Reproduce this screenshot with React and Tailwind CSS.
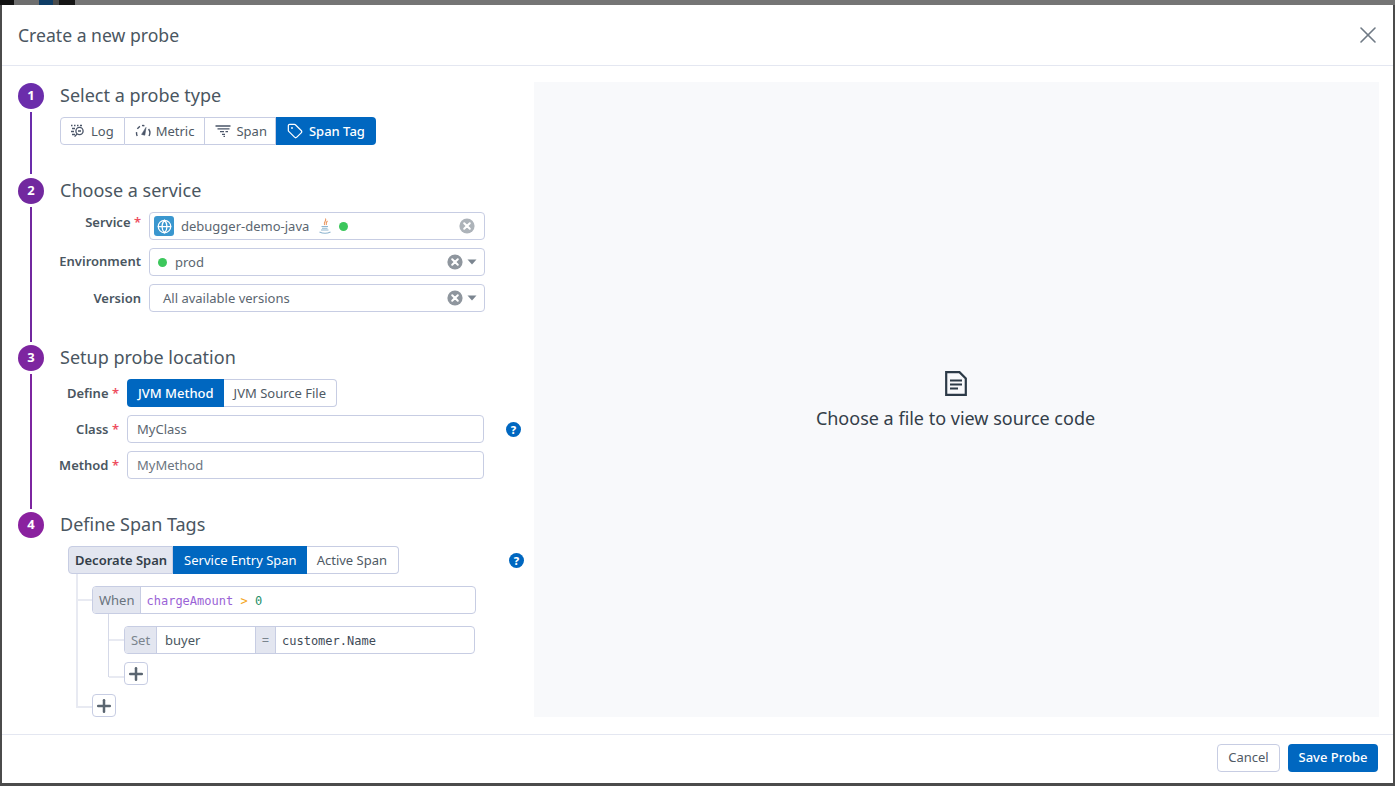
import React from "react";
import { Tag, X, Plus, Globe } from "lucide-react";

const LogIcon = () => (
  <svg width="16" height="14" viewBox="0 0 16 14" fill="none" stroke="#4a5568" strokeWidth="1.3">
    <path d="M1 1.5h1.5M4 1.5h1.5M7 1.5h1.5M10 1.5h2M2 4.5h3M1 7.5h3M2 10.5h3" />
    <circle cx="9.5" cy="7" r="3.6" />
    <path d="M7 10l-2.4 2.6M8 7h3" />
  </svg>
);
const GaugeIcon = () => (
  <svg width="16" height="14" viewBox="0 0 16 14" fill="none" stroke="#4a5568" strokeWidth="1.4">
    <path d="M2.2 12A6.5 6.5 0 0 1 1.6 8.2M2.4 4.8A6.5 6.5 0 0 1 5 2.4M7 1.6a6.5 6.5 0 0 1 2.4.1M14 12A6.5 6.5 0 0 0 13.6 5" />
    <path d="M6.6 10.4L11 3.4L9.8 11.2z" fill="#4a5568" strokeWidth="0.6" />
  </svg>
);
const SpanIcon = () => (
  <svg width="16" height="12" viewBox="0 0 16 12" fill="none" stroke="#4a5568" strokeWidth="1.3">
    <path d="M0.5 1h15M2.5 3.8h12M5 6.6h4M10.5 6.6h2.5M7 9.4h3M8.5 11.5h1.5" />
  </svg>
);
const JavaIcon = () => (
  <svg width="14" height="16" viewBox="0 0 14 16" fill="none" strokeWidth="1.1">
    <path d="M7.5 0.5C9 3 5 4 6.5 7M9.5 3C7.5 4.5 8 5.5 8.4 7" stroke="#e9945c" />
    <path d="M3.5 8.5h6.5M4 10.3h5.5M3 12h7.5M1.5 14c3 1.4 8 1.4 11 0" stroke="#8fb6d0" />
  </svg>
);
const FileIcon = () => (
  <svg width="22" height="25" viewBox="0 0 22 25" fill="none" stroke="#2c3a47" strokeWidth="2.2">
    <path d="M1.2 1.2h13.3l6.3 6.3v16.3H1.2z" />
    <path d="M5 9.5h12M5 13.5h12M5 17.5h8" />
  </svg>
);
const ClearIcon = ({ color = "#8f969e" }) => (
  <svg width="16" height="16" viewBox="0 0 16 16">
    <circle cx="8" cy="8" r="7.6" fill={color} />
    <path d="M5.2 5.2l5.6 5.6M10.8 5.2l-5.6 5.6" stroke="#fff" strokeWidth="2" strokeLinecap="round" />
  </svg>
);
const Caret = () => (
  <svg width="10" height="6" viewBox="0 0 10 6"><path d="M0.5 0.5h9L5 5.5z" fill="#7b8590" /></svg>
);
const Help = () => (
  <span className="flex h-[15px] w-[15px] items-center justify-center rounded-full bg-[#0067c0] text-[11px] leading-none font-extrabold text-white">?</span>
);
const Dot = () => <span className="h-[9px] w-[9px] shrink-0 rounded-full bg-[#3cc75c]" />;
const Req = () => <span className="text-[#ee4d5f]"> *</span>;

const Step = ({ n, color, lineH, height, title, children }) => (
  <div className="flex gap-[16px]" style={{ height }}>
    <div className="flex w-[26px] shrink-0 flex-col items-center">
      <span className={`flex h-[26px] w-[26px] items-center justify-center rounded-full text-[13px] font-bold text-white ${color}`}>{n}</span>
      {lineH ? <span className={`mt-[3px] w-[2px] ${color}`} style={{ height: lineH }} /> : null}
    </div>
    <div className="min-w-0 flex-1">
      <h2 className="h-[26px] text-[18px] leading-[24px] font-normal text-[#4a5661]">{title}</h2>
      {children}
    </div>
  </div>
);

const Row = ({ label, req, labelW, labelClass = "pt-[2px]", children }) => (
  <div className="flex items-center">
    <label className={`mr-[8px] flex shrink-0 justify-end text-[13px] font-semibold whitespace-nowrap text-[#4a5661] ${labelClass}`} style={{ width: labelW - 1 }}>
      <span>{label}{req ? <Req /> : null}</span>
    </label>
    {children}
  </div>
);

const field = "flex h-[28px] items-center rounded-[4px] border border-[#c7cde3] bg-white text-[13px] text-[#5b6670]";
const seg = "flex h-full items-center border-r border-[#c7cde3] pt-[2px] text-[13px] text-[#4a5560]";
const addBtn = "flex h-[23px] w-[24px] items-center justify-center rounded-[4px] border border-[#c7cde3] bg-white text-[#5a6570]";

export default function App() {
  return (
    <div className="relative h-[786px] w-[1395px] overflow-hidden bg-[#4b4b4b] px-[2px] pt-[5px] pb-[3px] font-['Noto_Sans',sans-serif]">
      <span className="absolute top-0 left-0 h-[5px] w-[14px] bg-[#111]" />
      <span className="absolute top-0 left-[39px] h-[5px] w-[14px] bg-[#0f3d66]" />
      <span className="absolute top-0 left-[59px] h-[5px] w-[16px] bg-[#151515]" />
      <span className="absolute top-0 left-[14px] h-[5px] w-[25px] bg-[#6e6e6e]" />
      <span className="absolute top-0 left-[75px] h-[5px] w-[1320px] bg-[#757575]" />
      <div className="relative flex h-full w-full flex-col bg-white">
        <header className="flex h-[61px] shrink-0 items-center justify-between border-b border-[#e4e7f1] pr-[11px] pl-[16px]">
          <h1 className="text-[17.6px] font-normal text-[#4a5661]">Create a new probe</h1>
          <X size={28} strokeWidth={1.4} className="text-[#6f7a85]" />
        </header>
        <main className="flex min-h-0 flex-1">
          <section className="w-[532px] shrink-0 pt-[17px] pl-[16px]">
            <Step n="1" color="bg-[#6b2dab]" lineH={62} height={95} title="Select a probe type">
              <div className="mt-[8px] flex h-[28px] w-fit text-[13px] text-[#4f5a65]">
                <span className="flex items-center gap-[5px] rounded-l-[4px] border border-[#c7cde3] pr-[10px] pl-[9px]"><LogIcon /><span className="pt-[2px]">Log</span></span>
                <span className="flex items-center gap-[5px] border-y border-r border-[#c7cde3] pr-[10px] pl-[10px]"><GaugeIcon /><span className="pt-[2px]">Metric</span></span>
                <span className="flex items-center gap-[5px] border-y border-r border-[#c7cde3] pr-[8px] pl-[10px]"><SpanIcon /><span className="pt-[2px]">Span</span></span>
                <span className="flex items-center gap-[6px] rounded-r-[4px] bg-[#0067c0] pr-[11px] pl-[11px] font-medium text-white"><Tag size={16} strokeWidth={1.8} /><span className="pt-[2px]">Span Tag</span></span>
              </div>
            </Step>
            <Step n="2" color="bg-[#72289f]" lineH={135} height={167} title="Choose a service">
              <div className="mt-[8px] flex flex-col gap-[8px]">
                <Row label="Service" req labelW={82} labelClass="mb-[6px]">
                  <div className={`${field} w-[336px] pr-[9px] pl-[4px]`}>
                    <span className="mr-[7px] flex h-[20px] w-[20px] items-center justify-center rounded-[3px] bg-[#3a97cf]"><Globe size={15} strokeWidth={2} className="text-white" /></span>
                    <span className="pt-[2px]">debugger-demo-java</span>
                    <span className="mr-[7px] ml-[9px] flex"><JavaIcon /></span>
                    <Dot />
                    <span className="ml-auto flex"><ClearIcon color="#adb3b9" /></span>
                  </div>
                </Row>
                <Row label="Environment" labelW={82} labelClass="">
                  <div className={`${field} w-[336px] pr-[7px] pl-[8px]`}>
                    <Dot />
                    <span className="ml-[8px] pt-[2px]">prod</span>
                    <span className="mr-[4px] ml-auto flex"><ClearIcon /></span>
                    <Caret />
                  </div>
                </Row>
                <Row label="Version" labelW={82}>
                  <div className={`${field} w-[336px] pr-[7px] pl-[13px]`}>
                    <span className="pt-[2px]">All available versions</span>
                    <span className="mr-[4px] ml-auto flex"><ClearIcon /></span>
                    <Caret />
                  </div>
                </Row>
              </div>
            </Step>
            <Step n="3" color="bg-[#7d25a0]" lineH={135} height={167} title="Setup probe location">
              <div className="mt-[8px] flex flex-col gap-[8px]">
                <Row label="Define" req labelW={60}>
                  <div className="flex h-[28px] text-[13px]">
                    <span className="flex items-center rounded-l-[4px] bg-[#0067c0] pt-[2px] pr-[10px] pl-[11px] font-medium text-white">JVM Method</span>
                    <span className="flex items-center rounded-r-[4px] border-y border-r border-[#c7cde3] px-[10px] pt-[2px] text-[#4f5a65]">JVM Source File</span>
                  </div>
                </Row>
                <Row label="Class" req labelW={60}>
                  <div className={`${field} w-[357px] pl-[9px] text-[#4a5661]`}><span className="pt-[2px]">MyClass</span></div>
                  <span className="ml-[22px] flex"><Help /></span>
                </Row>
                <Row label="Method" req labelW={60}>
                  <div className={`${field} w-[357px] pl-[9px] text-[#6b7580]`}><span className="pt-[2px]">MyMethod</span></div>
                </Row>
              </div>
            </Step>
            <Step n="4" color="bg-[#8a219f]" height={201} title="Define Span Tags">
              <div className="mt-[8px] flex w-[464px] items-center justify-between pl-[8px]">
                <div className="flex h-[28px] text-[13px]">
                  <span className="flex items-center rounded-l-[4px] border border-[#c7cde3] bg-[#e3e6f0] pt-[2px] pr-[5px] pl-[6px] font-semibold text-[#333e49]">Decorate Span</span>
                  <span className="flex items-center bg-[#0067c0] pt-[2px] pr-[10px] pl-[11px] font-normal text-white">Service Entry Span</span>
                  <span className="flex items-center rounded-r-[4px] border-y border-r border-[#c7cde3] pt-[2px] pr-[11px] pl-[10px] text-[#4f5a65]">Active Span</span>
                </div>
                <Help />
              </div>
              <div className="relative mt-[12px] ml-[32px] w-[384px]">
                <span className="absolute top-[-12px] left-[-16px] h-[134px] w-[2px] bg-[#e8eaf2]" />
                <span className="absolute top-[13px] left-[-14px] h-[2px] w-[14px] bg-[#e8eaf2]" />
                <div className={`${field} w-[384px] overflow-hidden`}>
                  <span className={`${seg} bg-[#e3e6f0] pr-[5px] pl-[6px] text-[#69737d]`}>When</span>
                  <span className="pt-[2px] pl-[6px] font-['DejaVu_Sans_Mono',monospace] text-[12px]">
                    <span className="text-[#9a63d6]">chargeAmount</span>{" "}
                    <span className="text-[#f5a623]">&gt;</span>{" "}
                    <span className="text-[#1f8f6a]">0</span>
                  </span>
                </div>
                <div className="relative mt-[12px] ml-[32px] w-[351px]">
                  <span className="absolute top-[-12px] left-[-16px] h-[63px] w-[1px] bg-[#d5d9e8]" />
                  <span className="absolute top-[13px] left-[-15px] h-[2px] w-[15px] bg-[#e8eaf2]" />
                  <span className="absolute top-[50px] left-[-15px] h-[2px] w-[15px] bg-[#e8eaf2]" />
                  <div className={`${field} w-[351px] overflow-hidden`}>
                    <span className={`${seg} w-[32px] justify-center bg-[#e3e6f0] text-[#7a848e]`}>Set</span>
                    <span className={`${seg} w-[99px] pl-[8px] text-[#4a5661]`}>buyer</span>
                    <span className={`${seg} w-[20px] justify-center bg-[#e3e6f0] text-[10px] text-[#7a848e]`}>=</span>
                    <span className="pt-[2px] pl-[6px] font-['DejaVu_Sans_Mono',monospace] text-[12px] text-[#3f4b57]">customer.Name</span>
                  </div>
                  <div className={`${addBtn} mt-[8px]`}><Plus size={20} strokeWidth={3} /></div>
                </div>
                <div className={`${addBtn} mt-[9px]`}><Plus size={20} strokeWidth={3} /></div>
                <span className="absolute bottom-[9px] left-[-16px] h-[2px] w-[16px] bg-[#e8eaf2]" />
              </div>
            </Step>
          </section>
          <section className="mt-[16px] mb-[17px] flex w-[845px] shrink-0 flex-col items-center justify-center bg-[#f8f9fb] pt-[4px] pr-[2px]">
            <FileIcon />
            <p className="mt-[9px] text-[18px] text-[#333e49]">Choose a file to view source code</p>
          </section>
        </main>
        <footer className="flex h-[49px] shrink-0 items-center justify-end gap-[8px] border-t border-[#e4e7f1] pr-[15px] pb-[3px]">
          <button className="h-[28px] w-[63px] rounded-[4px] border border-[#c7cde3] bg-white text-[13px] text-[#4f5a65]">Cancel</button>
          <button className="h-[28px] w-[90px] rounded-[4px] bg-[#0067c0] text-[13px] font-medium text-white">Save Probe</button>
        </footer>
      </div>
    </div>
  );
}
